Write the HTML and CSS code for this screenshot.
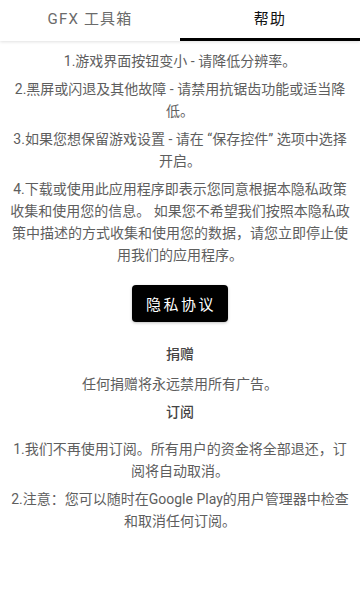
FILE: index.html
```html
<!DOCTYPE html>
<html lang="zh">
<head>
<meta charset="utf-8">
<link rel="stylesheet" href="styles.css">
</head>
<body>
<div class="tabs">
  <div class="tab">GFX 工具箱</div>
  <div class="tab active">帮助</div>
</div>
<main class="content">
  <p class="para">1.游戏界面按钮变小 - 请降低分辨率。</p>
  <p class="para">2.黑屏或闪退及其他故障 - 请禁用抗锯齿功能或适当降低。</p>
  <p class="para">3.如果您想保留游戏设置 - 请在 “保存控件” 选项中选择开启。</p>
  <p class="para">4.下载或使用此应用程序即表示您同意根据本隐私政策收集和使用您的信息。 如果您不希望我们按照本隐私政策中描述的方式收集和使用您的数据，请您立即停止使用我们的应用程序。</p>
  <div class="btn-row"><button class="btn">隐私协议</button></div>
  <h2 class="title donate">捐赠</h2>
  <p class="para">任何捐赠将永远禁用所有广告。</p>
  <h2 class="title sub">订阅</h2>
  <p class="para">1.我们不再使用订阅。所有用户的资金将全部退还，订阅将自动取消。</p>
  <p class="para">2.注意：您可以随时在Google Play的用户管理器中检查和取消任何订阅。</p>
</main>
</body>
</html>
```

FILE: styles.css
```css
html, body {
  margin: 0;
  padding: 0;
  background: #fff;
}
body {
  font-family: Roboto, "Noto Sans CJK SC", sans-serif;
  width: 360px;
  height: 614px;
  overflow: hidden;
}
.tabs {
  display: flex;
  height: 41px;
  background: #fff;
  box-shadow: 0 1px 3px rgba(0,0,0,0.12);
  position: relative;
}
.tab {
  flex: 1;
  display: flex;
  align-items: center;
  justify-content: center;
  font-size: 15px;
  letter-spacing: 1.2px;
  color: #6b6b6b;
  padding-bottom: 3px;
  box-sizing: border-box;
  border-bottom: 3px solid transparent;
}
.tab.active {
  color: #111;
  border-bottom-color: #000;
}
.content {
  padding: 9px 8px 0;
  text-align: center;
}
.para {
  margin: 0 0 6px;
  font-size: 14px;
  line-height: 22px;
  color: #5e5e5e;
}
.btn-row {
  display: flex;
  justify-content: center;
  padding-top: 13px;
}
.btn {
  width: 96px;
  height: 37px;
  background: #000;
  color: #fff;
  border: none;
  border-radius: 4px;
  font-family: Roboto, "Noto Sans CJK SC", sans-serif;
  font-size: 15px;
  letter-spacing: 2.5px;
  padding: 0 0 0 2px;
  box-shadow: 0 1px 3px rgba(0,0,0,0.25);
}
.title {
  margin: 0 0 8px;
  font-size: 14px;
  line-height: 22px;
  font-weight: 500;
  color: #444;
}
.donate {
  margin-top: 21px;
}
.sub {
  margin-top: 2px;
  margin-bottom: 15px;
}
```
